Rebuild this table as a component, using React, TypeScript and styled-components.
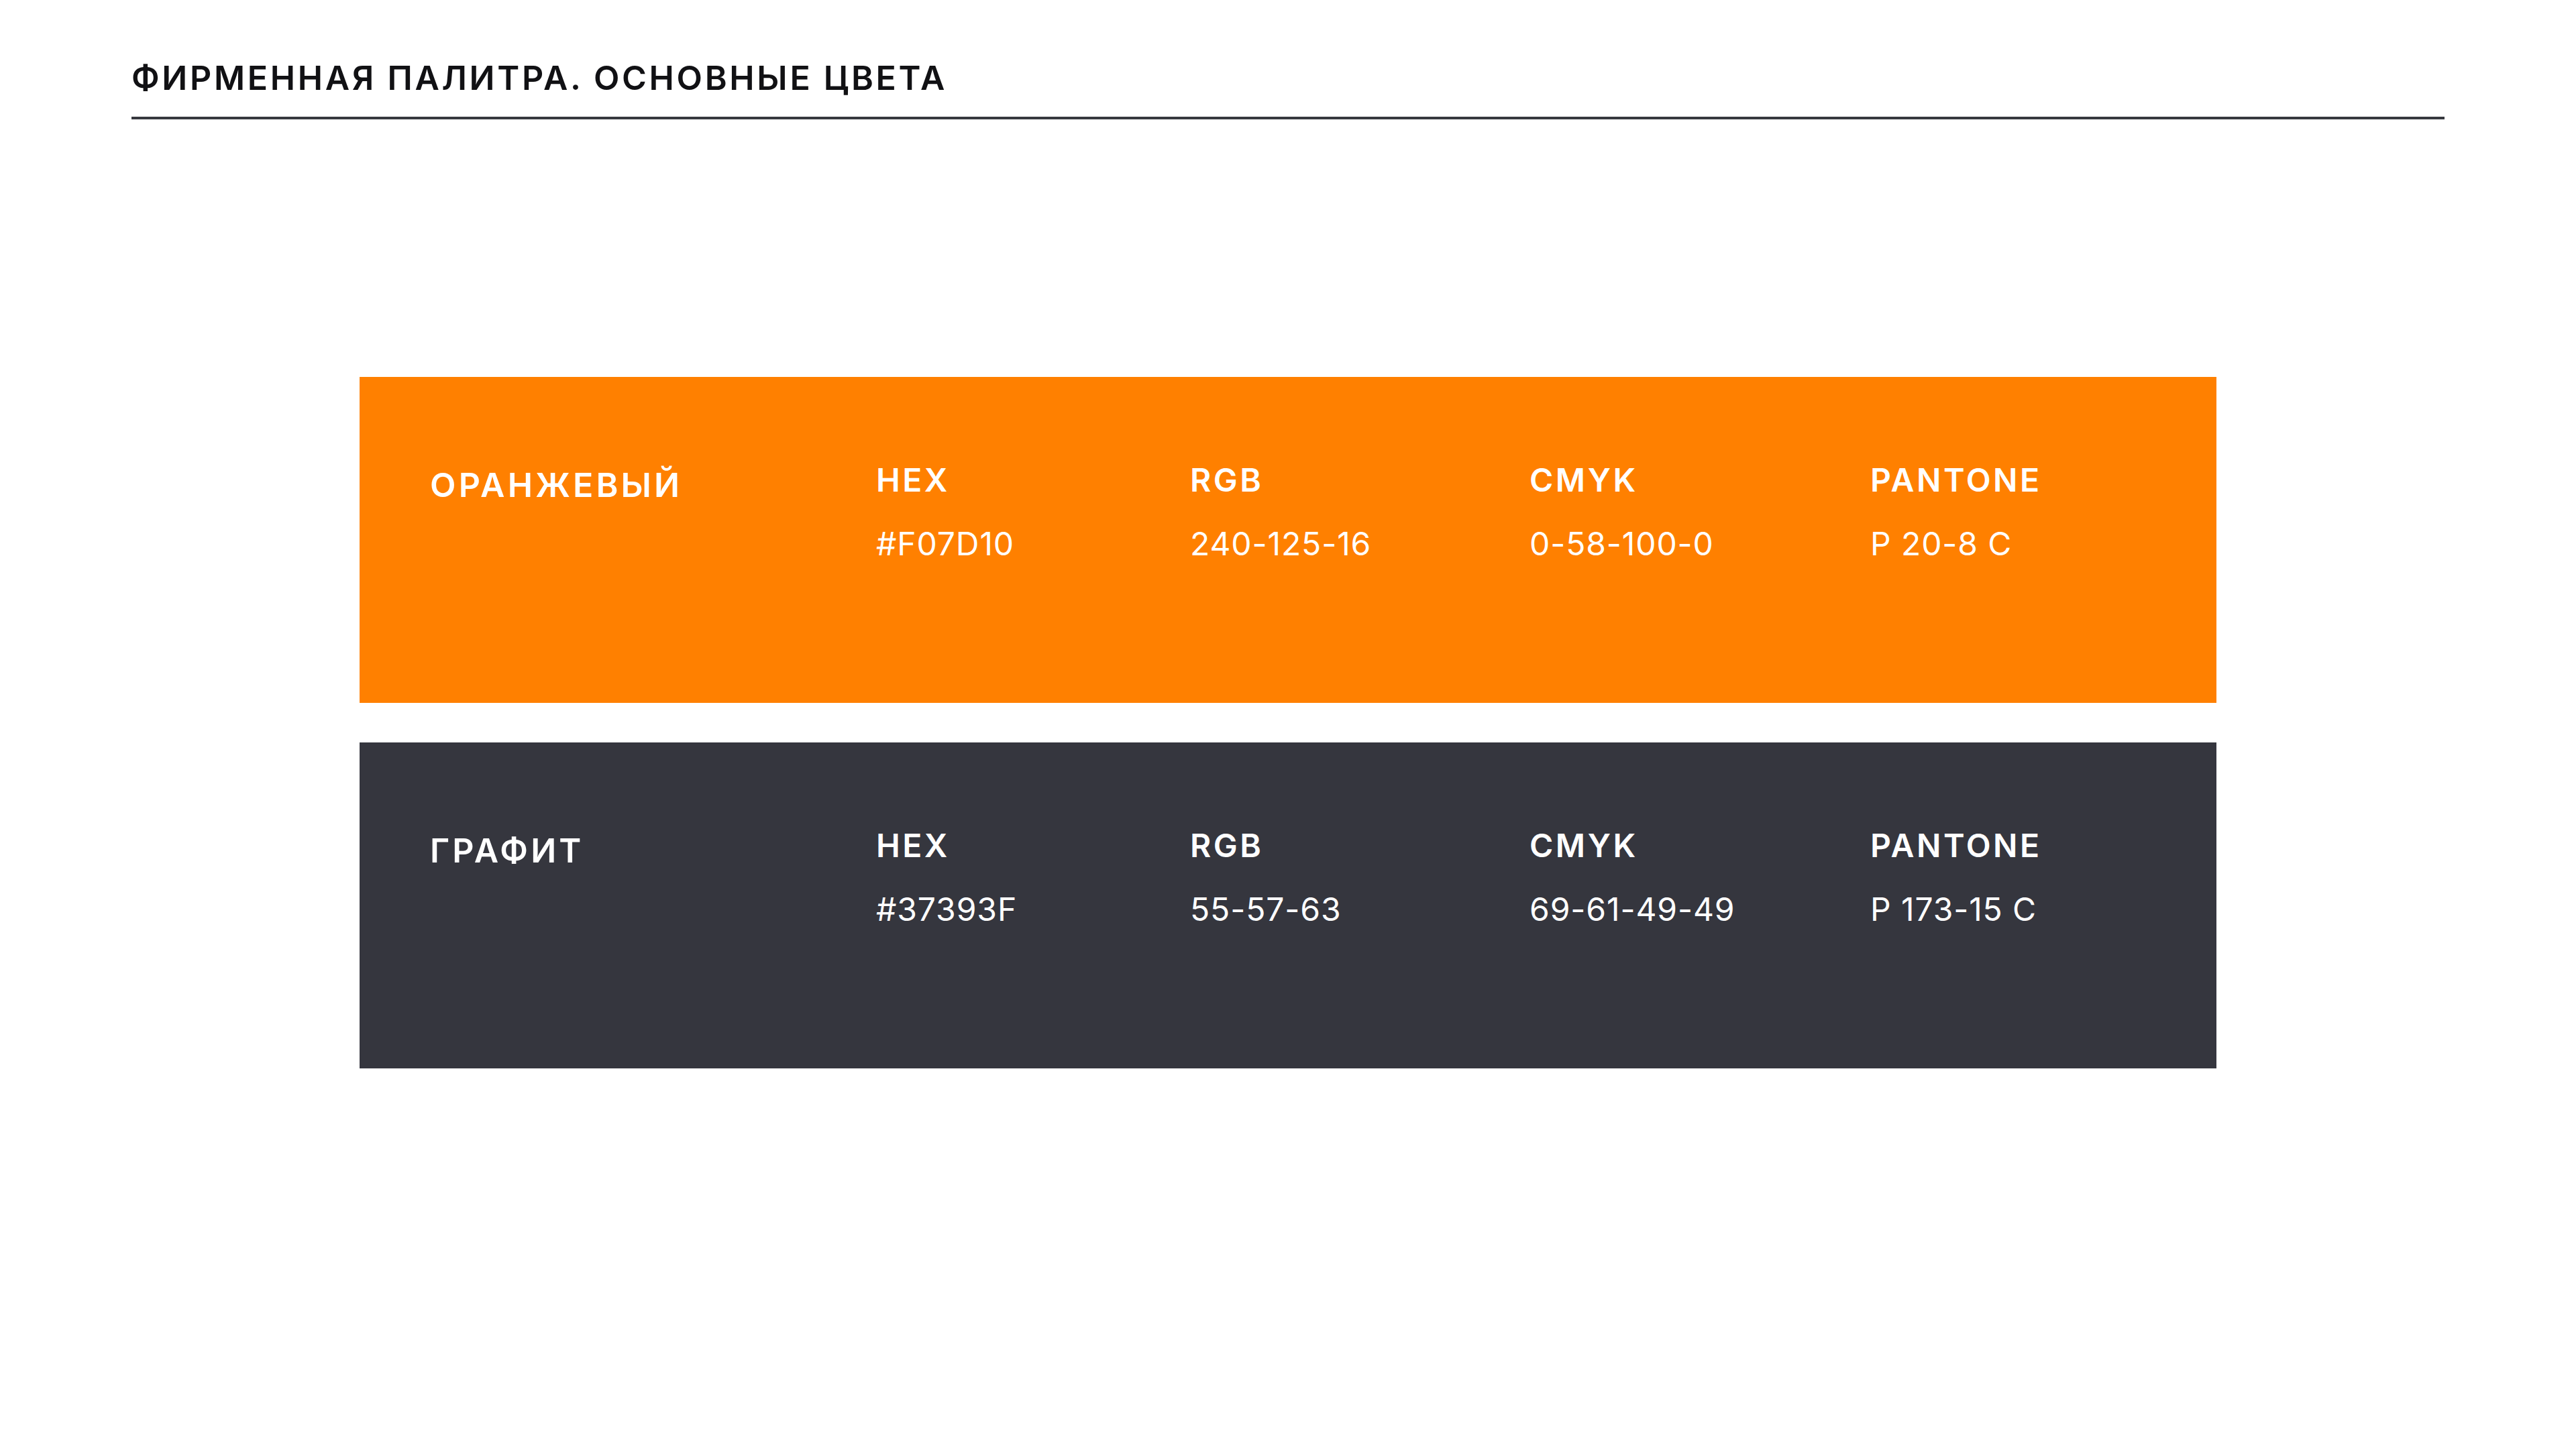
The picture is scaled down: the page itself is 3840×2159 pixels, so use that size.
import React from "react";
import styled, { createGlobalStyle } from "styled-components";

const Global = createGlobalStyle`
  html, body { margin: 0; padding: 0; background: #ffffff; }
  body { font-family: Inter, "Noto Sans", sans-serif; }
`;

const Page = styled.div`
  width: 3840px;
  height: 2159px;
  box-sizing: border-box;
  padding: 91px 196px 0 196px;
  background: #ffffff;
  display: flex;
  flex-direction: column;
`;

const Title = styled.h1`
  margin: 0;
  font-family: Inter, "Noto Sans", sans-serif;
  font-weight: 600;
  font-size: 50px;
  line-height: 50px;
  letter-spacing: 3.7px;
  color: #111114;
`;

const Rule = styled.div`
  margin-top: 33px;
  height: 4px;
  background: #37393f;
`;

const Swatches = styled.div`
  margin: 384px auto 0;
  width: 2768px;
  display: flex;
  flex-direction: column;
  gap: 59px;
`;

const Swatch = styled.section<{ $bg: string }>`
  height: 486px;
  box-sizing: border-box;
  background: ${(p) => p.$bg};
  padding: 130px 0 0 105px;
  display: grid;
  grid-template-columns: 665px 468px 506px 508px 1fr;
  align-items: start;
  color: #ffffff;
`;

const Name = styled.div`
  margin-top: 6px;
  font-weight: 600;
  font-size: 50px;
  line-height: 50px;
  letter-spacing: 4.2px;
`;

const Field = styled.div`
  display: flex;
  flex-direction: column;
  gap: 47px;
`;

const Label = styled.div`
  font-weight: 600;
  font-size: 48px;
  line-height: 48px;
  letter-spacing: 3.5px;
`;

const Value = styled.div`
  font-weight: 400;
  font-size: 48px;
  line-height: 48px;
  letter-spacing: 0.9px;
`;

type Color = {
  name: string;
  bg: string;
  hex: string;
  rgb: string;
  cmyk: string;
  pantone: string;
};

const colors: Color[] = [
  { name: "ОРАНЖЕВЫЙ", bg: "#ff8000", hex: "#F07D10", rgb: "240-125-16", cmyk: "0-58-100-0", pantone: "P 20-8 C" },
  { name: "ГРАФИТ", bg: "#35363e", hex: "#37393F", rgb: "55-57-63", cmyk: "69-61-49-49", pantone: "P 173-15 C" },
];

export default function App() {
  return (
    <>
      <Global />
      <Page>
        <Title>ФИРМЕННАЯ ПАЛИТРА. ОСНОВНЫЕ ЦВЕТА</Title>
        <Rule />
        <Swatches>
          {colors.map((c) => (
            <Swatch key={c.name} $bg={c.bg}>
              <Name>{c.name}</Name>
              <Field>
                <Label>HEX</Label>
                <Value>{c.hex}</Value>
              </Field>
              <Field>
                <Label>RGB</Label>
                <Value>{c.rgb}</Value>
              </Field>
              <Field>
                <Label>CMYK</Label>
                <Value>{c.cmyk}</Value>
              </Field>
              <Field>
                <Label>PANTONE</Label>
                <Value>{c.pantone}</Value>
              </Field>
            </Swatch>
          ))}
        </Swatches>
      </Page>
    </>
  );
}
